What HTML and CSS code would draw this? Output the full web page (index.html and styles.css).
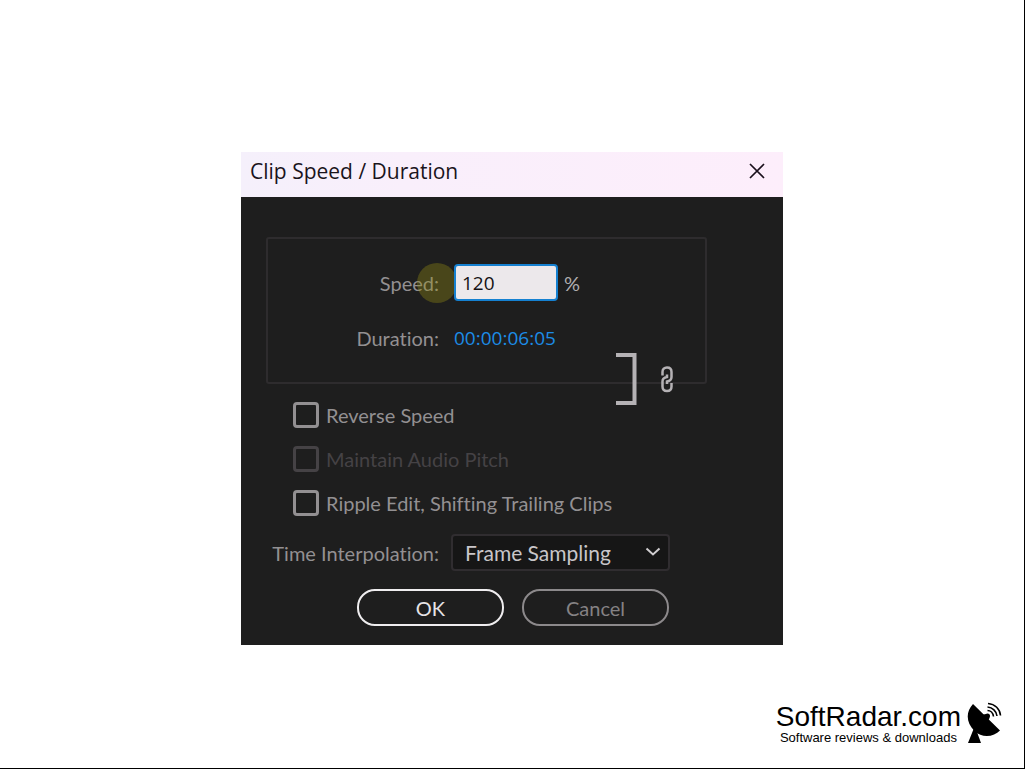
FILE: index.html
```html
<!DOCTYPE html>
<html lang="en">
  <head>
    <meta charset="UTF-8" />
    <meta name="viewport" content="width=device-width, initial-scale=1.0" />
    <title>Clip Speed / Duration</title>
    <link rel="stylesheet" href="styles.css">
  </head>
  <body>
    <main class="dialog">
      <header class="titlebar">
        <h1>Clip Speed / Duration</h1>
        <button type="button" class="close" aria-label="Close">
          <svg width="16" height="16" viewBox="0 0 16 16">
            <path d="M1 1L15 15M15 1L1 15" />
          </svg>
        </button>
      </header>

      <form class="content">
        <div class="timing">
          <label class="speed-label" for="speed">Speed:</label>
          <div class="speed-value">
            <input type="text" id="speed" value="120" />
            <span>%</span>
          </div>
          <label for="duration">Duration:</label>
          <input type="text" id="duration" value="00:00:06:05" />
          <div class="link">
            <svg class="bracket" width="21" height="52" viewBox="0 0 21 52">
              <path d="M0 2H18.500V50H0" />
            </svg>
            <button type="button" class="chain" aria-label="Link speed and duration">
              <svg width="14" height="27" viewBox="0 0 14 27">
                <path d="M2.500 9.500V6C2.500 3.200 4.300 1.500 7 1.500S11.500 3.200 11.500 6V11C11.500 13.500 10 15 7 15.500V18" />
                <path d="M11.500 17V20.500C11.500 23.300 9.700 25 7 25S2.500 23.300 2.500 20.500V15.500C2.500 13 4 11.500 7 11V8.500" />
              </svg>
            </button>
          </div>
        </div>

        <div class="options">
          <label><input type="checkbox" />Reverse Speed</label>
          <label class="disabled"><input type="checkbox" disabled />Maintain Audio Pitch</label>
          <label><input type="checkbox" />Ripple Edit, Shifting Trailing Clips</label>
        </div>

        <div class="interpolation">
          <label for="interpolation">Time Interpolation:</label>
          <div class="select">
            <select id="interpolation">
              <option>Frame Sampling</option>
            </select>
            <svg width="16" height="10" viewBox="0 0 16 10">
              <path d="M1.500 1.500L8 7.500L14.500 1.500" />
            </svg>
          </div>
        </div>

        <div class="actions">
          <button type="submit" class="primary">OK</button>
          <button type="button">Cancel</button>
        </div>
      </form>
    </main>

    <footer class="brand">
      <div>
        <div class="brand-name">SoftRadar.com</div>
        <div class="brand-tagline">Software reviews &amp; downloads</div>
      </div>
      <svg width="35" height="42" viewBox="0 0 35 42">
        <path d="M6 2L33 28.500C27 35 15 36.500 7.500 29C-1 21-1.500 10 6 2Z" />
        <path d="M15 13L18.500 12L22.500 16L21 19Z" />
        <circle cx="20.500" cy="14" r="2.500" />
        <path d="M7 26L10 30L14 41H1Z" />
        <g class="waves">
          <path d="M20.500 8.500C23.500 8.500 26 11 26.500 14.500" />
          <path d="M20.500 5C25.500 5.500 29.500 9 30 14" />
          <path d="M21 1.500C28 2 33 7 33.500 13.500" />
        </g>
      </svg>
    </footer>
  </body>
</html>
```

FILE: styles.css
```css
* {
  box-sizing: border-box;
}
body {
  margin: 0;
  padding-top: 152px;
  min-height: 100vh;
  display: flex;
  flex-direction: column;
  align-items: center;
  background: #fff;
  border-right: 1px solid #000;
  border-bottom: 1px solid #000;
  font-family: Lato, sans-serif;
  font-size: 20px;
  line-height: 26px;
  font-variant-ligatures: none;
}
input,
select,
button {
  font: inherit;
  margin: 0;
}
button {
  background: none;
  border: none;
  padding: 0;
  cursor: pointer;
}
svg {
  display: block;
  fill: none;
}
.dialog {
  width: 542px;
  max-width: 100%;
  background: #1e1e1e;
  color: #939092;
}
.titlebar {
  display: flex;
  align-items: center;
  justify-content: space-between;
  height: 45px;
  padding: 0 18px 7px 9px;
  background: linear-gradient(to right, #f5f0fb, #f9effb 30%, #fdeefb);
  color: #1a141b;
}
.titlebar h1 {
  margin: 0;
  font-family: "Open Sans", sans-serif;
  font-size: 21px;
  font-weight: normal;
}
.close svg {
  stroke: #1a101b;
  stroke-width: 1.7;
}
.content {
  display: flex;
  flex-direction: column;
  gap: 18px;
  padding: 40px 25px 19px;
}
.timing {
  position: relative;
  width: 441px;
  max-width: 100%;
  display: grid;
  grid-template-columns: 171px 1fr;
  gap: 18px 15px;
  align-items: center;
  padding: 25px 0 26px;
  border: 2px solid #2e2c2e;
  border-radius: 3px;
}
.timing label {
  text-align: right;
}
.speed-label {
  position: relative;
}
/* pointer highlight */
.speed-label::after {
  content: "";
  position: absolute;
  top: -7px;
  right: -18px;
  width: 40px;
  height: 40px;
  border-radius: 50%;
  background: rgba(150, 142, 20, 0.36);
}
.speed-value {
  position: relative;
  display: flex;
  align-items: center;
  gap: 6px;
  color: #b0adaf;
}
#speed,
#duration {
  height: 37px;
  font-family: "Open Sans", sans-serif;
  font-size: 19px;
}
#speed {
  width: 104px;
  padding: 0 6px;
  background: #ece8eb;
  border: 2px solid #1580d0;
  border-radius: 4px;
  color: #141214;
}
#duration {
  width: 120px;
  padding: 0;
  background: none;
  border: none;
  color: #1c8ce6;
}
.link {
  position: absolute;
  right: 31px;
  bottom: -23px;
  display: flex;
  align-items: center;
  gap: 23px;
}
.link svg {
  stroke: #b5b2b5;
}
.bracket {
  stroke-width: 4;
}
.chain svg {
  stroke-width: 2.5;
}
.options {
  display: flex;
  flex-direction: column;
  gap: 18px;
  padding-left: 27px;
}
.options label {
  display: flex;
  align-items: center;
  gap: 7px;
}
.options input {
  appearance: none;
  width: 26px;
  height: 26px;
  border: 3px solid #939092;
  border-radius: 4px;
}
.options .disabled {
  color: #454245;
}
.options .disabled input {
  border-color: #454245;
}
.interpolation {
  display: flex;
  align-items: center;
  gap: 12px;
}
.interpolation label {
  width: 173px;
  text-align: right;
  white-space: nowrap;
}
.select {
  position: relative;
}
.select select {
  appearance: none;
  width: 219px;
  height: 37px;
  padding: 0 12px;
  background: #161616;
  border: 2px solid #302d30;
  border-radius: 4px;
  color: #c9c6c9;
  font-size: 21px;
}
.select svg {
  position: absolute;
  top: 13px;
  right: 9px;
  stroke: #d0cdd0;
  stroke-width: 2;
  pointer-events: none;
}
.actions {
  display: flex;
  gap: 18px;
  padding-left: 91px;
}
.actions button {
  width: 147px;
  height: 37px;
  border: 2px solid #8c898b;
  border-radius: 18px;
  color: #858284;
}
.actions .primary {
  border-color: #efedef;
  color: #e6e3e6;
}
.brand {
  margin-top: auto;
  align-self: flex-end;
  display: flex;
  align-items: center;
  gap: 6px;
  padding: 0 22px 24px 0;
  font-family: "Liberation Sans", Arial, sans-serif;
  color: #000;
  text-align: center;
}
.brand-name {
  font-size: 28px;
  line-height: 29px;
}
.brand-tagline {
  font-size: 13px;
  line-height: 13px;
}
.brand svg {
  fill: #000;
}
.brand .waves {
  fill: none;
  stroke: #000;
  stroke-width: 1.6;
}
```
